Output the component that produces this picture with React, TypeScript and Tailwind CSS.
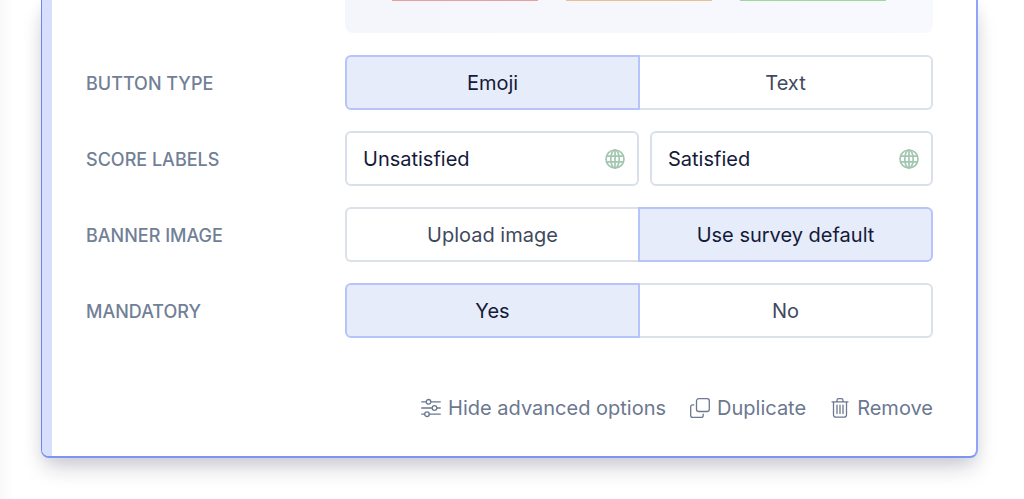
import { useState } from "react";
import type { ReactNode } from "react";
import clsx from "clsx";

function Icon({ children, className }: { children: ReactNode; className?: string }) {
  return (
    <svg
      viewBox="0 0 20 20"
      fill="none"
      stroke="currentColor"
      strokeWidth="1.3"
      strokeLinecap="round"
      strokeLinejoin="round"
      aria-hidden="true"
      className={clsx("size-5 shrink-0", className)}
    >
      {children}
    </svg>
  );
}

function GlobeIcon() {
  return (
    <Icon className="text-[#a3c6b0]">
      <g strokeWidth="1.7">
        <circle cx="10" cy="10" r="9" />
        <ellipse cx="10" cy="10" rx="4.2" ry="9" />
        <path d="M10 1v18M1.7 7.2h16.6M1.7 12.8h16.6" />
      </g>
    </Icon>
  );
}

function SlidersIcon() {
  return (
    <Icon>
      <circle cx="7.5" cy="3.8" r="2.3" />
      <circle cx="13.5" cy="10" r="2.3" />
      <circle cx="6" cy="16.2" r="2.3" />
      <path d="M.7 3.8h4.5M9.8 3.8h9.5M.7 10h10.5M15.8 10h3.5M.7 16.2h3M8.3 16.2h11" />
    </Icon>
  );
}

function CopyIcon() {
  return (
    <Icon>
      <rect x="6.5" y=".7" width="12.8" height="12.8" rx="2.2" />
      <path d="M3.8 6.8H2.6A1.9 1.9 0 0 0 .7 8.7v8.7a1.9 1.9 0 0 0 1.9 1.9h8.7a1.9 1.9 0 0 0 1.9-1.9v-1.2" />
    </Icon>
  );
}

function TrashIcon() {
  return (
    <Icon>
      <path d="M2 3.8h16M7 3.8V2.2A1.5 1.5 0 0 1 8.5.7h3A1.5 1.5 0 0 1 13 2.2v1.6M3.5 3.8V17a2.2 2.2 0 0 0 2.2 2.2h8.6a2.2 2.2 0 0 0 2.2-2.2V3.8M7 7.2v8.2M10 7.2v8.2M13 7.2v8.2" />
    </Icon>
  );
}

function Row({ label, children }: { label: string; children: ReactNode }) {
  return (
    <div role="group" aria-label={label} className="flex items-center">
      <span className="w-[259px] shrink-0 pt-0.5 text-lg font-medium text-[#718096] uppercase">{label}</span>
      {children}
    </div>
  );
}

function Toggle({ options, initial }: { options: string[]; initial: string }) {
  const [value, setValue] = useState(initial);

  return (
    <div className="flex min-w-0 flex-1">
      {options.map((option) => (
        <button
          key={option}
          type="button"
          aria-pressed={value === option}
          onClick={() => setValue(option)}
          className={clsx(
            "h-[55px] flex-1 border-2 text-xl first:rounded-l-md last:rounded-r-md",
            value === option
              ? "border-[#b6c4fb] bg-[#e6ecf9] text-[#141a3a]"
              : "border-[#dbe1e9] bg-white text-[#3f495c] first:border-r-0 last:border-l-0",
          )}
        >
          {option}
        </button>
      ))}
    </div>
  );
}

function ScoreInput({ label, value, className }: { label: string; value: string; className: string }) {
  return (
    <label
      className={clsx(
        "flex h-[55px] min-w-0 items-center rounded-md border-2 border-[#dae0eb] bg-white pr-3 pl-4",
        className,
      )}
    >
      <input
        type="text"
        aria-label={label}
        defaultValue={value}
        className="min-w-0 flex-1 bg-transparent text-xl text-[#141a3a] outline-none"
      />
      <GlobeIcon />
    </label>
  );
}

function Action({ icon, children }: { icon: ReactNode; children: ReactNode }) {
  return (
    <button type="button" className="flex items-center gap-[7px]">
      {icon}
      {children}
    </button>
  );
}

export default function App() {
  return (
    <main className="flow-root bg-[linear-gradient(to_right,#f9f9f9,#ffffff_14px)] pr-[46px] pb-[41px] pl-[41px] font-['Inter',sans-serif]">
      <section className="flex overflow-hidden rounded-b-lg border-r-2 border-b-2 border-l border-r-[#8fa3fb] border-b-[#7f93f2] border-l-[#6f86ee] bg-white shadow-[0_12px_22px_-4px_rgba(20,25,50,0.22),0_2px_14px_rgba(20,40,40,0.05)]">
        <div className="w-[10px] shrink-0 bg-[#d6e0fd]" />
        <div className="min-w-0 flex-1 pr-[43px] pb-[34px] pl-[34px]">
          <div className="ml-[259px] flex h-[33px] gap-7 rounded-b-lg bg-linear-to-r from-[#f4f6fb] to-[#f8f9fe] px-[47px]">
            <div className="h-px flex-1 bg-[#e7a09f]" />
            <div className="h-px flex-1 bg-[#e9c08f]" />
            <div className="h-px flex-1 bg-[#9ed89c]" />
          </div>

          <div className="mt-[22px] flex flex-col gap-[21px]">
            <Row label="Button type">
              <Toggle options={["Emoji", "Text"]} initial="Emoji" />
            </Row>
            <Row label="Score labels">
              <div className="flex min-w-0 flex-1 gap-[11px]">
                <ScoreInput label="Lowest score label" value="Unsatisfied" className="w-1/2 shrink-0" />
                <ScoreInput label="Highest score label" value="Satisfied" className="flex-1" />
              </div>
            </Row>
            <Row label="Banner image">
              <Toggle options={["Upload image", "Use survey default"]} initial="Use survey default" />
            </Row>
            <Row label="Mandatory">
              <Toggle options={["Yes", "No"]} initial="Yes" />
            </Row>
          </div>

          <div className="mt-14 flex justify-end gap-6 text-xl text-[#6b7890]">
            <Action icon={<SlidersIcon />}>Hide advanced options</Action>
            <Action icon={<CopyIcon />}>Duplicate</Action>
            <Action icon={<TrashIcon />}>Remove</Action>
          </div>
        </div>
      </section>
    </main>
  );
}
